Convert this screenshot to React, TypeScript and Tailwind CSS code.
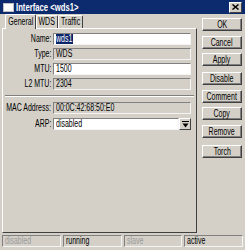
import React from 'react';

const fields = [
  { label: 'Name:', value: 'wds1', editable: true, selected: true },
  { label: 'Type:', value: 'WDS', editable: false },
  { label: 'MTU:', value: '1500', editable: true },
  { label: 'L2 MTU:', value: '2304', editable: false },
];

const buttons = [
  { label: 'OK', mt: 'mt-0' },
  { label: 'Cancel', mt: 'mt-[5px]' },
  { label: 'Apply', mt: 'mt-[4px]' },
  { label: 'Disable', mt: 'mt-[6px]' },
  { label: 'Comment', mt: 'mt-[5px]' },
  { label: 'Copy', mt: 'mt-[4px]' },
  { label: 'Remove', mt: 'mt-[5px]' },
  { label: 'Torch', mt: 'mt-[7px]' },
];

const status = [
  { label: 'disabled', dim: true },
  { label: 'running', dim: false },
  { label: 'slave', dim: true },
  { label: 'active', dim: false },
];

const sunken = 'border border-t-[#808080] border-l-[#808080] border-b-[#f4f4f4] border-r-[#f4f4f4]';
const raised = 'border border-t-white border-l-white border-b-[#404040] border-r-[#404040]';

// the screenshot is squeezed sideways, so text is narrowed to match
function T({ children, o = 'l' }: { children: React.ReactNode; o?: 'l' | 'r' | 'c' }) {
  const origin = o === 'l' ? 'origin-left' : o === 'r' ? 'origin-right' : 'origin-center';
  return <span className={`inline-block whitespace-nowrap scale-x-[0.7] ${origin}`}>{children}</span>;
}

function Field({ label, children, editable }: { label: string; children: React.ReactNode; editable: boolean }) {
  return (
    <div className="flex items-center h-[12px]">
      <div className="w-[48px] flex justify-end pr-[2px] leading-none">
        <T o="r">{label}</T>
      </div>
      <div className={`w-[138px] h-[12px] flex items-center pl-[2px] leading-none overflow-hidden ${sunken} ${editable ? 'bg-white' : 'bg-[#d4d0c8]'}`}>
        {children}
      </div>
    </div>
  );
}

export default function App() {
  return (
    <div className="w-[245px] h-[250px] bg-[#d4d0c8] flex flex-col overflow-hidden text-[10px] text-black font-['Liberation_Sans',sans-serif]">
      {/* Title bar */}
      <div className="h-[14px] bg-[#0c2a6e] flex items-center pl-[3px] pr-[3px]">
        <div className="w-[11px] h-[9px] bg-white border border-[#c0c0c0] flex-none" />
        <span className="ml-[2px] text-white font-bold leading-none text-[11px]">
          <T>Interface &lt;wds1&gt;</T>
        </span>
        <div className={`ml-auto w-[13px] h-[11px] bg-[#d4d0c8] ${raised} flex items-center justify-center`}>
          <svg width="7" height="6" viewBox="0 0 7 6">
            <path d="M0.5 0.5 L6.5 5.5 M6.5 0.5 L0.5 5.5" stroke="black" strokeWidth="1.5" />
          </svg>
        </div>
      </div>

      <div className="flex flex-1">
        {/* Left: tabs + panel */}
        <div className="ml-[2px] w-[195px] flex flex-col">
          <div className="flex items-end h-[14px] pl-[3px]">
            <div className="w-[31px] h-[15px] bg-[#d4d0c8] border border-b-0 border-t-white border-l-white border-r-[#404040] rounded-t-[2px] flex items-center justify-center leading-none relative top-[1px] z-10">
              <T o="c">General</T>
            </div>
            <div className="w-[22px] h-[13px] border border-b-0 border-t-white border-l-white border-r-[#404040] rounded-t-[2px] flex items-center justify-center leading-none">
              <T o="c">WDS</T>
            </div>
            <div className="w-[25px] h-[13px] border border-b-0 border-t-white border-l-white border-r-[#404040] rounded-t-[2px] flex items-center justify-center leading-none">
              <T o="c">Traffic</T>
            </div>
          </div>
          <div className={`flex-1 mb-[2px] ${raised} pt-[4px] pl-[2px]`}>
            <div className="flex flex-col gap-[3px]">
              {fields.map((f) => (
                <Field key={f.label} label={f.label} editable={f.editable}>
                  {f.selected ? (
                    <span className="bg-[#0a246a] text-white w-[17px] h-[10px] flex items-center">
                      <T>{f.value}</T>
                    </span>
                  ) : (
                    <T>{f.value}</T>
                  )}
                </Field>
              ))}
            </div>
            <div className="mt-[5px] mr-[2px] h-[2px] border-t border-t-[#808080] border-b border-b-white" />
            <div className="mt-[5px] flex flex-col gap-[4px]">
              <Field label="MAC Address:" editable={false}>
                <T>00:0C:42:68:50:E0</T>
              </Field>
              <div className="flex items-center h-[12px]">
                <div className="w-[48px] flex justify-end pr-[2px] leading-none">
                  <T o="r">ARP:</T>
                </div>
                <div className={`w-[126px] h-[12px] flex items-center pl-[2px] leading-none bg-white ${sunken}`}>
                  <T>disabled</T>
                </div>
                <div className={`w-[12px] h-[12px] bg-[#d4d0c8] ${raised} flex items-center justify-center`}>
                  <svg width="7" height="7" viewBox="0 0 7 7">
                    <path d="M0 0.5 H7" stroke="black" strokeWidth="1" />
                    <path d="M0.5 2.5 H6.5 L3.5 6.5 Z" fill="black" />
                  </svg>
                </div>
              </div>
            </div>
          </div>
        </div>

        {/* Right: buttons */}
        <div className="ml-[5px] pt-[4px] flex flex-col w-[40px]">
          {buttons.map((b) => (
            <div
              key={b.label}
              className={`${b.mt} h-[13px] w-[40px] flex items-center justify-center leading-none ${raised} shadow-[inset_-1px_-1px_0_#808080]`}
            >
              <T o="c">{b.label}</T>
            </div>
          ))}
        </div>
      </div>

      {/* Status bar */}
      <div className="h-[13px] mb-[2px] flex gap-[2px] px-[2px]">
        {status.map((s) => (
          <div
            key={s.label}
            className={`flex-1 h-[12px] flex items-center pl-[2px] leading-none ${sunken} ${s.dim ? 'text-[#9a9a9a]' : 'text-black'}`}
          >
            <T>{s.label}</T>
          </div>
        ))}
      </div>
    </div>
  );
}
